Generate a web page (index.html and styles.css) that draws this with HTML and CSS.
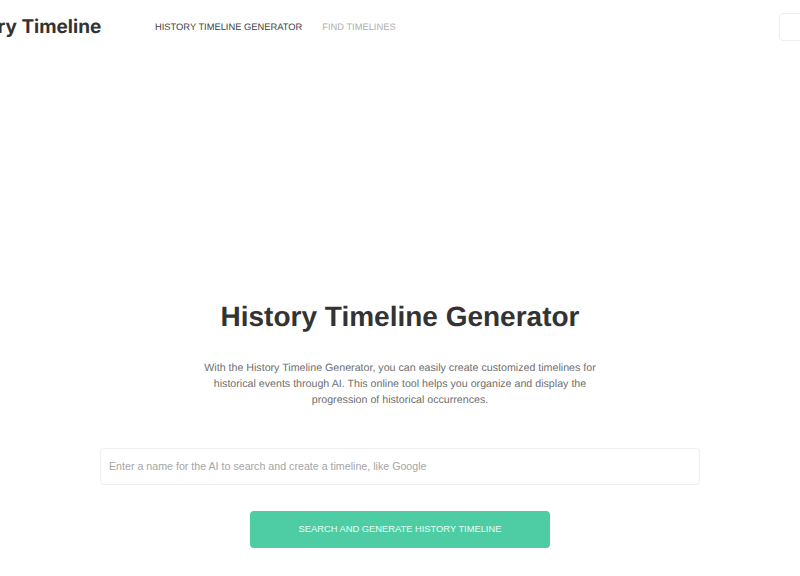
FILE: index.html
```html
<!DOCTYPE html>
<html lang="en">
  <head>
    <meta charset="UTF-8" />
    <title>History Timeline Generator</title>
    <link rel="stylesheet" href="styles.css">
  </head>

  <body>
    <header class="site-header">
      <a class="logo" href="#">History Timeline</a>
      <nav class="nav">
        <a class="nav-link active" href="#">HISTORY TIMELINE GENERATOR</a>
        <a class="nav-link" href="#">FIND TIMELINES</a>
      </nav>
      <button class="menu-button"></button>
    </header>

    <main class="hero">
      <h1>History Timeline Generator</h1>
      <p class="intro">With the History Timeline Generator, you can easily create customized timelines for historical events through AI. This online tool helps you organize and display the progression of historical occurrences.</p>
      <input class="search-input" type="text" placeholder="Enter a name for the AI to search and create a timeline, like Google" />
      <button class="generate-button">SEARCH AND GENERATE HISTORY TIMELINE</button>
    </main>
  </body>
</html>
```

FILE: styles.css
```css
html,
body {
  margin: 0;
  height: 576px;
  overflow: hidden;
}

body {
  font-family: "Liberation Sans", Arial, sans-serif;
  background: #fff;
  color: #333;
  text-rendering: geometricPrecision;
}

.site-header {
  display: flex;
  align-items: center;
  height: 53px;
}

.logo {
  flex: none;
  width: 155px;
  margin-left: -51px;
  font-family: Inter, sans-serif;
  font-size: 19px;
  font-weight: 700;
  white-space: nowrap;
  color: #333;
  text-decoration: none;
}

.nav {
  display: flex;
  gap: 20px;
  margin-left: 51px;
}

.nav-link {
  font-size: 9.33px;
  color: #b0b0b0;
  text-decoration: none;
}

.nav-link.active {
  color: #444;
}

.menu-button {
  flex: none;
  width: 40px;
  height: 28px;
  margin-left: auto;
  margin-right: -19px;
  border: 1px solid #eee;
  border-radius: 4px;
  background: #fff;
}

.hero {
  display: flex;
  flex-direction: column;
  align-items: center;
  padding-top: 247px;
}

h1 {
  margin: 0;
  font-size: 28px;
  line-height: 34px;
  font-weight: 700;
  color: #333;
}

.intro {
  width: 400px;
  margin: 26px 0 0;
  font-size: 10.67px;
  line-height: 16px;
  text-align: center;
  color: #6f6f6f;
}

.search-input {
  box-sizing: border-box;
  width: 600px;
  height: 37px;
  margin-top: 40px;
  padding: 0 8px 2px;
  border: 1px solid #eee;
  border-radius: 4px;
  font-family: inherit;
  font-size: 10.67px;
}

.search-input::placeholder {
  color: #a6a6a6;
}

.generate-button {
  width: 300px;
  height: 37px;
  margin-top: 26px;
  padding: 0 0 2px;
  border: none;
  border-radius: 4px;
  background: #4ecda4;
  color: #e8fff6;
  font-family: inherit;
  font-size: 9.33px;
}
```
